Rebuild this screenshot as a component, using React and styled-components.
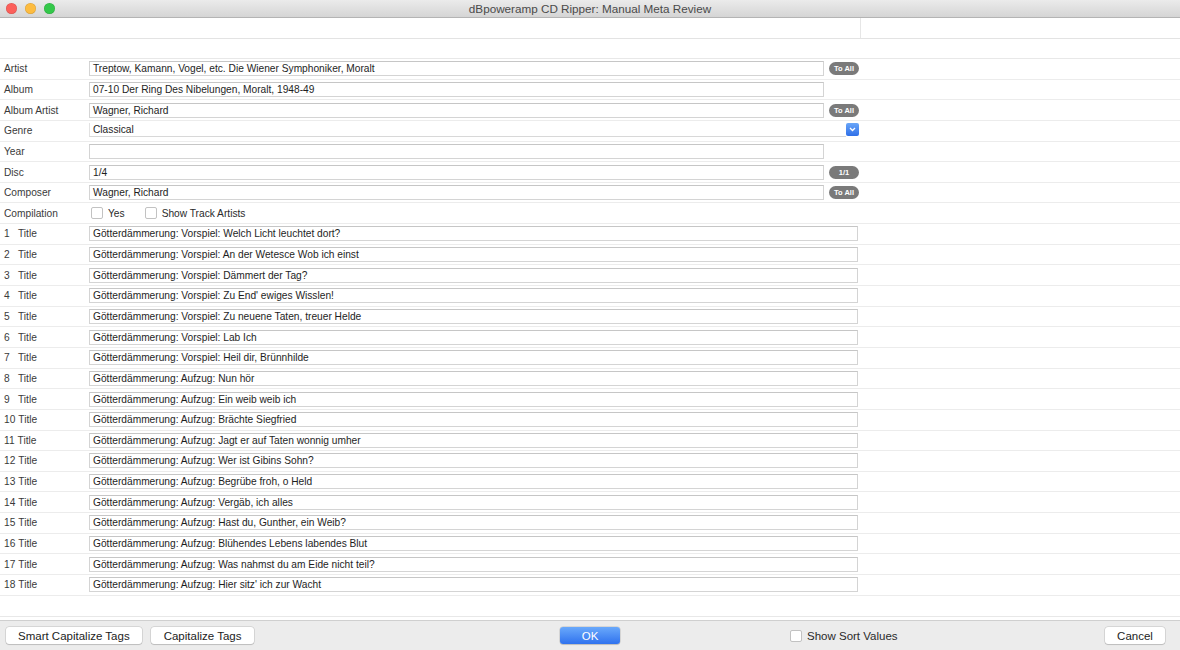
import React from 'react';
import styled, { createGlobalStyle } from 'styled-components';

const GlobalStyle = createGlobalStyle`
  html, body {
    margin: 0;
    padding: 0;
    background: #ffffff;
    font-family: "Liberation Sans", Arial, sans-serif;
  }
`;

const Window = styled.div`
  width: 1180px;
  height: 650px;
  display: flex;
  flex-direction: column;
  background: #ffffff;
  overflow: hidden;
`;

const TitleBar = styled.div`
  height: 17px;
  flex: 0 0 17px;
  position: relative;
  display: flex;
  align-items: center;
  justify-content: center;
  background: linear-gradient(#ebebeb, #d5d5d5);
  border-bottom: 1px solid #b4b4b4;
  font-size: 11.7px;
  color: #4a4a4a;
`;

const Lights = styled.div`
  position: absolute;
  left: 6px;
  top: 3px;
  display: flex;
  gap: 8px;
`;

const Light = styled.span`
  width: 11px;
  height: 11px;
  border-radius: 50%;
  background: ${p => p.color};
  box-shadow: inset 0 0 0 0.5px rgba(0, 0, 0, 0.15);
`;

const HeaderRow = styled.div`
  height: 20px;
  flex: 0 0 20px;
  display: flex;
  border-bottom: 1px solid #e3e3e3;
`;

const HeaderCell = styled.div`
  width: ${p => p.w || 'auto'};
  flex: ${p => (p.w ? '0 0 auto' : '1')};
  border-right: ${p => (p.divider ? '1px solid #e6e6e6' : 'none')};
`;

const Spacer = styled.div`
  height: ${p => p.h}px;
  flex: 0 0 ${p => p.h}px;
  border-bottom: 1px solid #e8e8e8;
`;

const Rows = styled.div`
  display: flex;
  flex-direction: column;
`;

const Row = styled.div`
  height: 20.65px;
  box-sizing: border-box;
  display: grid;
  grid-template-columns: 89px 735px 35px 1fr;
  align-items: center;
  border-bottom: 1px solid #ececec;
`;

const Label = styled.div`
  padding-left: 4px;
  font-size: 10.2px;
  color: #3a3a3a;
  white-space: nowrap;
`;

const Num = styled.span`
  display: inline-block;
  width: ${p => (p.wide ? 'auto' : '14px')};
  padding-right: ${p => (p.wide ? '3px' : '0')};
`;

const Field = styled.div`
  height: 15px;
  box-sizing: border-box;
  border: 1px solid #d4d4d4;
  border-top-color: #c6c6c6;
  background: #fff;
  display: flex;
  align-items: center;
  padding-left: 3px;
  font-size: 10.2px;
  color: #1e1e1e;
  white-space: nowrap;
  overflow: hidden;
  grid-column: ${p => (p.full ? '2 / 4' : '2 / 3')};
  margin-right: ${p => (p.full ? '1px' : '0')};
`;

const Pill = styled.div`
  justify-self: end;
  width: 30px;
  height: 13px;
  border-radius: 7px;
  background: #7a7a7a;
  color: #fff;
  font-size: 7.5px;
  font-weight: bold;
  display: flex;
  align-items: center;
  justify-content: center;
`;

const Select = styled.div`
  grid-column: 2 / 4;
  height: 14px;
  display: flex;
  align-items: center;
  position: relative;
  top: -1px;
`;

const SelectText = styled.div`
  flex: 1;
  height: 14px;
  box-sizing: border-box;
  padding-left: 3px;
  font-size: 10.2px;
  color: #1e1e1e;
  border-bottom: 1px solid #d8d8d8;
  border-left: 1px solid #e2e2e2;
  display: flex;
  align-items: center;
`;

const Chevron = styled.div`
  width: 13px;
  height: 13px;
  border-radius: 2px;
  background: linear-gradient(#69a6f8, #2f6fe8);
  display: flex;
  align-items: center;
  justify-content: center;
`;

const Checks = styled.div`
  grid-column: 2 / 5;
  display: flex;
  align-items: center;
  gap: 20px;
  padding-left: 2px;
`;

const Check = styled.label`
  display: flex;
  align-items: center;
  gap: 5px;
  font-size: ${p => p.size || 10.2}px;
  color: #2a2a2a;
`;

const Box = styled.span`
  width: ${p => p.s || 12}px;
  height: ${p => p.s || 12}px;
  box-sizing: border-box;
  border: 1px solid #c2c2c2;
  border-radius: 2px;
  background: #fff;
`;

const Footer = styled.div`
  margin-top: auto;
  height: 29px;
  flex: 0 0 29px;
  background: #ececec;
  border-top: 1px solid #cfcfcf;
  display: grid;
  grid-template-columns: 560px 230px 315px 1fr;
  align-items: center;
`;

const Group = styled.div`
  display: flex;
  align-items: center;
  gap: 9px;
  padding-left: ${p => p.pl || 0}px;
`;

const Button = styled.div`
  height: 17px;
  box-sizing: border-box;
  padding: 0 ${p => p.px || 11}px;
  border-radius: 3px;
  background: ${p => (p.primary ? 'linear-gradient(#6aa9fb, #2f72ee)' : '#ffffff')};
  color: ${p => (p.primary ? '#ffffff' : '#1c1c1c')};
  box-shadow: 0 0 0 0.5px rgba(0, 0, 0, 0.18), 0 1px 1px rgba(0, 0, 0, 0.12);
  font-size: 11.5px;
  display: flex;
  align-items: center;
  justify-content: center;
  width: ${p => (p.w ? `${p.w}px` : 'auto')};
`;

const topFields = [
  { label: 'Artist', value: 'Treptow, Kamann, Vogel, etc. Die Wiener Symphoniker, Moralt', pill: 'To All' },
  { label: 'Album', value: '07-10 Der Ring Des Nibelungen, Moralt, 1948-49' },
  { label: 'Album Artist', value: 'Wagner, Richard', pill: 'To All' },
  { label: 'Genre', value: 'Classical', select: true },
  { label: 'Year', value: '' },
  { label: 'Disc', value: '1/4', pill: '1/1' },
  { label: 'Composer', value: 'Wagner, Richard', pill: 'To All' },
];

const titles = [
  'Götterdämmerung: Vorspiel: Welch Licht leuchtet dort?',
  'Götterdämmerung: Vorspiel: An der Wetesce Wob ich einst',
  'Götterdämmerung: Vorspiel: Dämmert der Tag?',
  "Götterdämmerung: Vorspiel: Zu End' ewiges Wisslen!",
  'Götterdämmerung: Vorspiel: Zu neuene Taten, treuer Helde',
  'Götterdämmerung: Vorspiel: Lab Ich',
  'Götterdämmerung: Vorspiel: Heil dir, Brünnhilde',
  'Götterdämmerung: Aufzug: Nun hör',
  'Götterdämmerung: Aufzug: Ein weib weib ich',
  'Götterdämmerung: Aufzug: Brächte Siegfried',
  'Götterdämmerung: Aufzug: Jagt er auf Taten wonnig umher',
  'Götterdämmerung: Aufzug: Wer ist Gibins Sohn?',
  'Götterdämmerung: Aufzug: Begrübe froh, o Held',
  'Götterdämmerung: Aufzug: Vergäb, ich alles',
  'Götterdämmerung: Aufzug: Hast du, Gunther, ein Weib?',
  'Götterdämmerung: Aufzug: Blühendes Lebens labendes Blut',
  'Götterdämmerung: Aufzug: Was nahmst du am Eide nicht teil?',
  "Götterdämmerung: Aufzug: Hier sitz' ich zur Wacht",
];

const ChevronIcon = () => (
  <svg width="7" height="5" viewBox="0 0 7 5">
    <path d="M1 1 L3.5 3.5 L6 1" fill="none" stroke="#fff" strokeWidth="1.3" />
  </svg>
);

const App = () => {
  return (
    <>
      <GlobalStyle />
      <Window>
        <TitleBar>
          <Lights>
            <Light color="#fc605b" />
            <Light color="#fdbc40" />
            <Light color="#34c84a" />
          </Lights>
          dBpoweramp CD Ripper: Manual Meta Review
        </TitleBar>
        <HeaderRow>
          <HeaderCell w="860px" divider />
          <HeaderCell />
        </HeaderRow>
        <Spacer h={19} />
        <Rows>
          {topFields.map(f => (
            <Row key={f.label}>
              <Label>{f.label}</Label>
              {f.select ? (
                <Select>
                  <SelectText>{f.value}</SelectText>
                  <Chevron><ChevronIcon /></Chevron>
                </Select>
              ) : (
                <Field>{f.value}</Field>
              )}
              {f.pill && <Pill>{f.pill}</Pill>}
            </Row>
          ))}
          <Row>
            <Label>Compilation</Label>
            <Checks>
              <Check><Box />Yes</Check>
              <Check><Box />Show Track Artists</Check>
            </Checks>
          </Row>
          {titles.map((t, i) => (
            <Row key={i}>
              <Label>
                <Num wide={i >= 9}>{i + 1}</Num>Title
              </Label>
              <Field full>{t}</Field>
            </Row>
          ))}
          <Spacer h={20} />
        </Rows>
        <Footer>
          <Group pl={6}>
            <Button px={12}>Smart Capitalize Tags</Button>
            <Button px={13}>Capitalize Tags</Button>
          </Group>
          <Group>
            <Button primary w={60}>OK</Button>
          </Group>
          <Group>
            <Check size={11.5}><Box s={12} />Show Sort Values</Check>
          </Group>
          <Group>
            <Button w={60}>Cancel</Button>
          </Group>
        </Footer>
      </Window>
    </>
  );
};

export default App;
